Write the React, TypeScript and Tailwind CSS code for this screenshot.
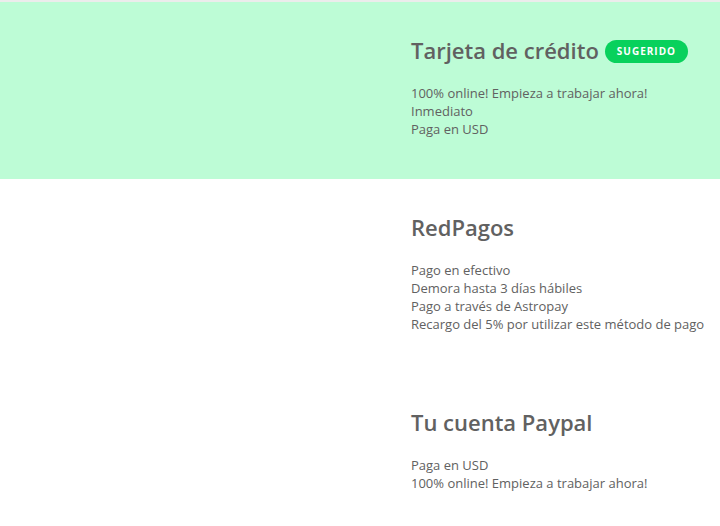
import React from 'react';

interface PaymentMethod {
  title: string;
  lines: string[];
  suggested?: boolean;
}

const methods: PaymentMethod[] = [
  {
    title: 'Tarjeta de crédito',
    lines: ['100% online! Empieza a trabajar ahora!', 'Inmediato', 'Paga en USD'],
    suggested: true,
  },
  {
    title: 'RedPagos',
    lines: [
      'Pago en efectivo',
      'Demora hasta 3 días hábiles',
      'Pago a través de Astropay',
      'Recargo del 5% por utilizar este método de pago',
    ],
  },
  {
    title: 'Tu cuenta Paypal',
    lines: ['Paga en USD', '100% online! Empieza a trabajar ahora!'],
  },
];

const App: React.FC = () => {
  return (
    <div className="min-h-screen bg-white font-['Open_Sans',sans-serif] text-[#616161] border-t-2 border-[#ececec]">
      {methods.map((method) => (
        <div
          key={method.title}
          className={`grid grid-cols-[411px_1fr] pt-[33px] pb-[41px] ${method.suggested ? 'bg-[#bdfcd6]' : ''}`}
        >
          <div></div>
          <div>
            <div className="flex items-center gap-[6px] mb-[19px]">
              <h2 className="text-[22px] leading-[30px] font-semibold">{method.title}</h2>
              {method.suggested && (
                <span className="mt-[2px] h-[23px] px-[12px] rounded-full bg-[#08d15c] text-white text-[10px] font-bold tracking-[0.1em] flex items-center">
                  SUGERIDO
                </span>
              )}
            </div>
            <ul className="text-[13px] leading-[18px]">
              {method.lines.map((line) => (
                <li key={line}>{line}</li>
              ))}
            </ul>
          </div>
        </div>
      ))}
    </div>
  );
};

export default App;
